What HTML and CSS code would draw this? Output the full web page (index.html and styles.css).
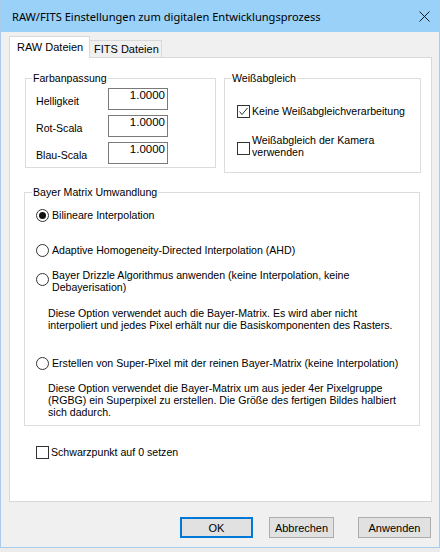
FILE: index.html
```html
<!DOCTYPE html>
<html lang="de">
<head>
<meta charset="utf-8">
<title>RAW/FITS Einstellungen</title>
<link rel="stylesheet" href="styles.css">
</head>
<body>
<div class="window">
  <div class="titlebar">
    <span class="title">RAW/FITS Einstellungen zum digitalen Entwicklungsprozess</span>
    <svg class="close" width="11" height="11" viewBox="0 0 11 11"><path d="M0.5 0.5 L10.5 10.5 M10.5 0.5 L0.5 10.5" stroke="#1a1a1a" stroke-width="1" fill="none"/></svg>
  </div>
  <div class="content">
    <div class="tabs">
      <div class="tab active">RAW Dateien</div>
      <div class="tab">FITS Dateien</div>
    </div>
    <div class="page">
      <div class="toprow">
        <fieldset class="group farb">
          <legend>Farbanpassung</legend>
          <div class="farb-body">
            <span class="lbl">Helligkeit</span><div class="num">1.0000</div>
            <span class="lbl">Rot-Scala</span><div class="num">1.0000</div>
            <span class="lbl">Blau-Scala</span><div class="num">1.0000</div>
          </div>
        </fieldset>
        <fieldset class="group weiss">
          <legend>Weißabgleich</legend>
          <div class="weiss-body">
            <div class="opt mid">
              <svg class="box" width="13" height="13" viewBox="0 0 13 13"><rect x="0.5" y="0.5" width="12" height="12" fill="#fff" stroke="#333"/><polyline points="2.5,6.5 5,9.5 10.5,3" fill="none" stroke="#333" stroke-width="1"/></svg>
              <span>Keine Weißabgleichverarbeitung</span>
            </div>
            <div class="opt top wb2">
              <svg class="box shift8" width="13" height="13" viewBox="0 0 13 13"><rect x="0.5" y="0.5" width="12" height="12" fill="#fff" stroke="#333"/></svg>
              <span class="multi">Weißabgleich der Kamera<br>verwenden</span>
            </div>
          </div>
        </fieldset>
      </div>
      <fieldset class="group bayer">
        <legend>Bayer Matrix Umwandlung</legend>
        <div class="bayer-body">
          <div class="opt mid r1">
            <svg class="box" width="13" height="13" viewBox="0 0 13 13"><circle cx="6.5" cy="6.5" r="6" fill="#fff" stroke="#333"/><circle cx="6.5" cy="6.5" r="3.5" fill="#111"/></svg>
            <span>Bilineare Interpolation</span>
          </div>
          <div class="opt mid r2">
            <svg class="box" width="13" height="13" viewBox="0 0 13 13"><circle cx="6.5" cy="6.5" r="6" fill="#fff" stroke="#333"/></svg>
            <span>Adaptive Homogeneity-Directed Interpolation (AHD)</span>
          </div>
          <div class="opt top r3">
            <svg class="box shift4" width="13" height="13" viewBox="0 0 13 13"><circle cx="6.5" cy="6.5" r="6" fill="#fff" stroke="#333"/></svg>
            <span class="multi">Bayer Drizzle Algorithmus anwenden (keine Interpolation, keine<br>Debayerisation)</span>
          </div>
          <p class="desc d1">Diese Option verwendet auch die Bayer-Matrix. Es wird aber nicht<br>interpoliert und jedes Pixel erhält nur die Basiskomponenten des Rasters.</p>
          <div class="opt mid r4">
            <svg class="box" width="13" height="13" viewBox="0 0 13 13"><circle cx="6.5" cy="6.5" r="6" fill="#fff" stroke="#333"/></svg>
            <span>Erstellen von Super-Pixel mit der reinen Bayer-Matrix (keine Interpolation)</span>
          </div>
          <p class="desc d2">Diese Option verwendet die Bayer-Matrix um aus jeder 4er Pixelgruppe<br>(RGBG) ein Superpixel zu erstellen. Die Größe des fertigen Bildes halbiert<br>sich dadurch.</p>
        </div>
      </fieldset>
      <div class="opt mid schwarz">
        <svg class="box" width="13" height="13" viewBox="0 0 13 13"><rect x="0.5" y="0.5" width="12" height="12" fill="#fff" stroke="#333"/></svg>
        <span>Schwarzpunkt auf 0 setzen</span>
      </div>
    </div>
    <div class="buttons">
      <button class="btn ok">OK</button>
      <button class="btn cancel">Abbrechen</button>
      <button class="btn apply">Anwenden</button>
    </div>
  </div>
</div>
</body>
</html>
```
FILE: styles.css
```css
* { box-sizing: border-box; }

body {
  margin: 0;
  width: 440px;
  height: 552px;
  overflow: hidden;
  background: linear-gradient(#d6d6d6, #ececec);
  font-family: "Liberation Sans", Arial, sans-serif;
  font-size: 10.6px;
  color: #000;
}

.window {
  height: 548px;
  background: #f0f0f0;
  border-left: 1px solid #a9cdea;
  border-right: 1px solid #a9cdea;
  border-bottom: 1px solid #a9cdea;
  display: flex;
  flex-direction: column;
}

.titlebar {
  height: 32px;
  flex: none;
  background: #99d1f9;
  display: flex;
  align-items: center;
  justify-content: space-between;
  padding: 0 9px 0 11px;
}

.title {
  font-family: "Noto Sans", "Open Sans", sans-serif;
  font-size: 11.1px;
  color: #000;
}

.close { display: block; }

.content {
  padding: 4px 7px 0 8px;
}

.tabs {
  display: flex;
  align-items: flex-end;
  height: 21px;
  font-size: 11px;
}

.tab {
  border: 1px solid #d9d9d9;
  border-bottom: 0;
  background: #f0f0f0;
  height: 17px;
  width: 72px;
  border-left: 0;
  padding: 2px 0 0 4px;
  line-height: 13px;
  white-space: nowrap;
}

.tab.active {
  background: #fff;
  border-left: 1px solid #d9d9d9;
  height: 22px;
  width: 81px;
  margin-bottom: -1px;
  padding: 4px 0 0 7px;
  position: relative;
  z-index: 1;
}

.page {
  height: 445px;
  background: #fff;
  border: 1px solid #d9d9d9;
  padding: 14px 0 0 14px;
}

.toprow {
  display: flex;
  align-items: flex-start;
  gap: 8px;
}

fieldset.group {
  margin: 0;
  padding: 0;
  border: 1px solid #dcdcdc;
  min-width: 0;
}

fieldset.group legend {
  padding: 0 1px;
  margin-left: 6px;
  line-height: 13px;
}

fieldset.group.farb {
  width: 191px;
  margin-left: 1px;
}

.farb-body {
  display: grid;
  grid-template-columns: 72px 60px;
  row-gap: 5px;
  align-items: center;
  padding: 3px 0 3px 10px;
}

.lbl {
  padding-top: 4px;
  line-height: 13px;
}

.num {
  height: 22px;
  border: 1px solid #7a7a7a;
  background: #fff;
  text-align: right;
  padding: 0 2px 0 0;
  line-height: 13px;
  font-size: 11.5px;
}

fieldset.group.weiss { width: 197px; }

.weiss-body {
  padding: 20px 4px 14px 12px;
}

.opt {
  display: flex;
  gap: 2px;
  line-height: 13px;
  white-space: nowrap;
}

.opt.mid { align-items: center; }
.opt.top { align-items: flex-start; }

.opt .box { flex: none; display: block; }
.shift8 { margin-top: 8px; }
.shift4 { margin-top: 4px; }

.multi { line-height: 12px; }

.wb2 { margin-top: 16px; }

fieldset.group.bayer {
  width: 396px;
  margin-top: 13px;
}

fieldset.group.bayer legend { margin-left: 7px; }

.bayer-body {
  padding: 10px 0 7px 11px;
}

.bayer-body .opt { gap: 3px; }

.r2 { margin-top: 22px; }
.r3 { margin-top: 12px; }
.r4 { margin-top: 26px; }

.desc {
  margin: 0 0 0 12px;
  line-height: 12px;
  white-space: nowrap;
}

.d1 { margin-top: 14px; }
.d2 { margin-top: 12px; }

.schwarz {
  margin: 20px 0 0 12px;
}

.buttons {
  display: flex;
  justify-content: flex-end;
  margin-top: 15px;
  padding-right: 1px;
}

.btn {
  height: 21px;
  margin: 0;
  padding: 0;
  background: #e1e1e1;
  border: 1px solid #adadad;
  font-family: "Liberation Sans", Arial, sans-serif;
  font-size: 11px;
  color: #000;
}

.ok {
  width: 73px;
  border-color: #0078d7;
  box-shadow: inset 0 0 0 1px #0078d7;
}

.cancel {
  width: 65px;
  margin-left: 16px;
}

.apply {
  width: 73px;
  margin-left: 24px;
}
```
